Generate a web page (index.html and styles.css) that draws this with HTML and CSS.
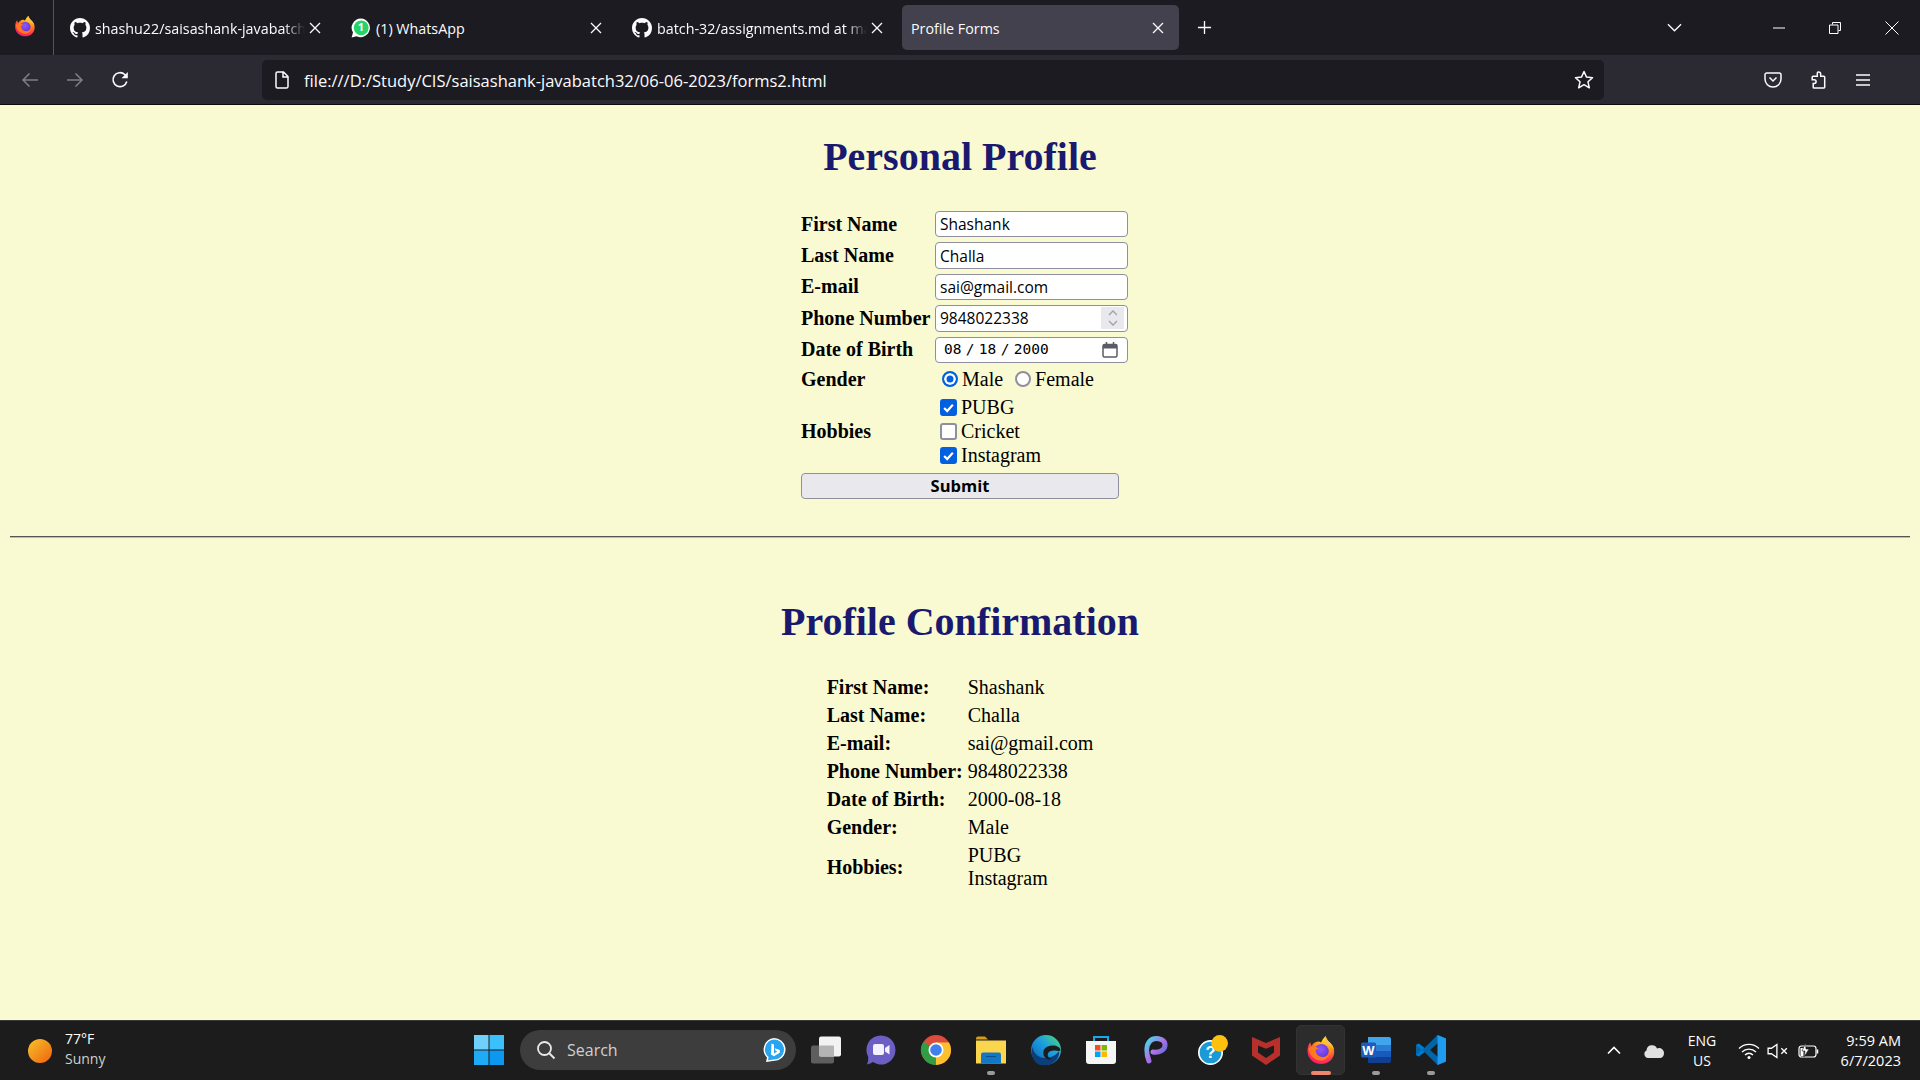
FILE: index.html
```html
<!DOCTYPE html>
<html lang="en">
<head>
<meta charset="utf-8">
<title>Profile Forms</title>
<link rel="stylesheet" href="styles.css">
</head>
<body>
<svg class="sprite" aria-hidden="true">
  <defs>
    <radialGradient id="ffBase" cx="0.7" cy="0.1" r="1">
      <stop offset="0" stop-color="#ffe226"/><stop offset="0.4" stop-color="#ff980e"/><stop offset="0.75" stop-color="#ff3750"/><stop offset="1" stop-color="#f5156c"/>
    </radialGradient>
    <radialGradient id="ffCore" cx="0.45" cy="0.35" r="0.8">
      <stop offset="0" stop-color="#9059ff"/><stop offset="1" stop-color="#592acb"/>
    </radialGradient>
    <linearGradient id="sunG" x1="0" y1="0" x2="1" y2="1">
      <stop offset="0" stop-color="#f7c22c"/><stop offset="1" stop-color="#f0620e"/>
    </linearGradient>
    <linearGradient id="edgeG" x1="0" y1="1" x2="1" y2="0">
      <stop offset="0" stop-color="#0c59a4"/><stop offset="0.55" stop-color="#1b9de2"/><stop offset="1" stop-color="#54dc6f"/>
    </linearGradient>
    <linearGradient id="pG" x1="0" y1="0" x2="1" y2="1">
      <stop offset="0" stop-color="#3ee0e8"/><stop offset="0.5" stop-color="#b46ee8"/><stop offset="1" stop-color="#2a6fd6"/>
    </linearGradient>
    <symbol id="i-firefox" viewBox="0 0 32 32">
      <path fill="url(#ffBase)" d="M21 1c.4 3 2.6 5 5 7.6 3 3.2 4.500 6.600 4 10.900C29.200 26.300 23.400 31 16 31 8 31 1.600 24.800 1.600 17c0-3.800 1-6.800 3-9.300.2 1.800.7 3 1.600 3.900.8-1.900 2.300-3.200 4.300-4.100 2-.9 4.300-.8 5.500.6 1.200-3 2.700-5.100 5-7.100z"/>
      <circle cx="16.500" cy="17.500" r="7.800" fill="url(#ffCore)"/>
      <path fill="#ff7a1a" d="M2.600 15c1.500-2.500 4-3.400 6-3 2.300.4 2.600 1.600 5 2.200-1.200 1-2.300.9-3.300 1.900 0 4 3 7.500 7.200 7.400 3.500 0 6.200-2.300 7-5.500.6 5-3.400 9.300-9 9.300C9.500 27.300 3.800 22 2.600 15z"/>
      <path fill="#ffbd4f" d="M21 1c.4 3 2.600 5 5 7.600 2 2.100 3.300 4.400 3.800 7-2-3.500-4.800-5-8.300-5.800-1.500-3-1.500-6-.5-8.800z"/>
    </symbol>
    <symbol id="i-gh" viewBox="0 0 16 16">
      <path fill="#fbfbfe" d="M8 0C3.580 0 0 3.580 0 8c0 3.540 2.290 6.530 5.470 7.590.4.070.55-.17.55-.38 0-.19-.01-.82-.01-1.490-2.010.37-2.530-.49-2.690-.94-.09-.23-.48-.94-.82-1.130-.28-.15-.68-.52-.01-.53.63-.01 1.080.58 1.230.82.72 1.210 1.870.87 2.330.66.070-.52.28-.87.51-1.070-1.780-.2-3.640-.89-3.640-3.950 0-.87.31-1.590.82-2.150-.08-.2-.36-1.020.08-2.120 0 0 .67-.21 2.200.82.64-.18 1.320-.27 2-.27s1.360.09 2 .27c1.530-1.040 2.200-.82 2.200-.82.44 1.100.16 1.920.08 2.120.51.56.82 1.270.82 2.150 0 3.070-1.870 3.750-3.650 3.950.29.25.54.73.54 1.480 0 1.070-.01 1.930-.01 2.200 0 .21.15.46.55.38A8.010 8.010 0 0 0 16 8c0-4.420-3.580-8-8-8z"/>
    </symbol>
    <symbol id="i-x" viewBox="0 0 12 12">
      <path d="M1 1l10 10M11 1L1 11" stroke="#fbfbfe" stroke-width="1.3" fill="none"/>
    </symbol>
  </defs>
</svg>

<header class="browser">
  <div class="tabbar">
    <div class="ff-slot"><svg class="ff-logo"><use href="#i-firefox"/></svg></div>
    <div class="tabs">
      <div class="tab">
        <svg class="favicon"><use href="#i-gh"/></svg>
        <span class="tab-title tab-fade">shashu22/saisashank-javabatch3</span>
        <svg class="tab-x"><use href="#i-x"/></svg>
      </div>
      <div class="tab">
        <svg class="favicon" viewBox="0 0 20 20">
          <path fill="#fff" d="M10 .5A9.300 9.300 0 0 0 2 14.600L.6 19.500l5-1.300A9.300 9.300 0 1 0 10 .5z"/>
          <circle cx="10.200" cy="9.800" r="7.400" fill="#25d366"/>
        </svg>
        <span class="wa-badge">1</span>
        <span class="tab-title">(1) WhatsApp</span>
        <svg class="tab-x"><use href="#i-x"/></svg>
      </div>
      <div class="tab">
        <svg class="favicon"><use href="#i-gh"/></svg>
        <span class="tab-title tab-fade">batch-32/assignments.md at ma</span>
        <svg class="tab-x"><use href="#i-x"/></svg>
      </div>
      <div class="tab tab-active">
        <span class="tab-title">Profile Forms</span>
        <svg class="tab-x"><use href="#i-x"/></svg>
      </div>
      <svg class="newtab" viewBox="0 0 16 16"><path d="M8 1v14M1 8h14" stroke="#fbfbfe" stroke-width="1.4"/></svg>
    </div>
    <svg class="chev" viewBox="0 0 16 10"><path d="M1 1l7 7 7-7" stroke="#fbfbfe" stroke-width="1.4" fill="none"/></svg>
    <div class="winctl">
      <svg viewBox="0 0 12 12" class="wc"><path d="M0 6h12" stroke="#fff" stroke-width="1"/></svg>
      <svg viewBox="0 0 12 12" class="wc"><path d="M3.500 2.500V.5h8v8h-2M.5 3h8.500v8.500H.5z" stroke="#fff" stroke-width="1" fill="none"/></svg>
      <svg viewBox="0 0 14 14" class="wc wc-x"><path d="M.5.500l13 13M13.500.500l-13 13" stroke="#fff" stroke-width="1"/></svg>
    </div>
  </div>
  <div class="toolbar">
    <svg class="tb-icon dim" viewBox="0 0 18 18"><path d="M17 9H2M8.500 2.500L2 9l6.500 6.500" stroke="#fbfbfe" stroke-width="1.5" fill="none"/></svg>
    <svg class="tb-icon dim" viewBox="0 0 18 18"><path d="M1 9h15M9.500 2.500L16 9l-6.500 6.500" stroke="#fbfbfe" stroke-width="1.5" fill="none"/></svg>
    <svg class="tb-icon" viewBox="0 0 18 18"><path d="M15.800 10.500A7 7 0 1 1 13.800 3.500L15.500 5.500" stroke="#fbfbfe" stroke-width="1.6" fill="none"/><path d="M16.800 1v6.300h-6.300z" fill="#fbfbfe"/></svg>
    <div class="urlbar">
      <svg class="file-ic" viewBox="0 0 16 18"><path d="M3.500 1h6L14 5.500v10a1.500 1.500 0 0 1-1.500 1.500h-9A1.500 1.500 0 0 1 2 15.500v-13A1.500 1.500 0 0 1 3.500 1zM9 1v5h5" stroke="#fbfbfe" stroke-width="1.5" fill="none"/></svg>
      <span class="url">file:///D:/Study/CIS/saisashank-javabatch32/06-06-2023/forms2.html</span>
      <svg class="star" viewBox="0 0 20 20"><path d="M10 1.500l2.500 5.600 6 .6-4.500 4.100 1.300 6L10 14.700l-5.300 3.100 1.300-6L1.500 7.700l6-.6z" stroke="#fbfbfe" stroke-width="1.5" fill="none" stroke-linejoin="round"/></svg>
    </div>
    <div class="tb-right">
      <svg class="tb-icon" viewBox="0 0 18 18"><path d="M2.800 2h12.400A1.800 1.800 0 0 1 17 3.800V8A8 8 0 0 1 1 8V3.800A1.800 1.800 0 0 1 2.800 2z" stroke="#fbfbfe" stroke-width="1.5" fill="none"/><path d="M5.500 6.500L9 10l3.500-3.500" stroke="#fbfbfe" stroke-width="1.5" fill="none"/></svg>
      <svg class="tb-icon" viewBox="0 0 18 18"><path d="M9.500 1c1.300 0 2.200 1 2.200 2.200v2h3c.6 0 1 .4 1 1v10.100c0 .4-.3.700-.7.700H5c-.5 0-.8-.3-.8-.8v-3.700h1a1.900 1.900 0 0 0 0-3.800h-2V6.200c0-.6.4-1 1-1h4.100v-2C8.300 2 8.200 1 9.500 1z" stroke="#fbfbfe" stroke-width="1.5" fill="none"/></svg>
      <svg class="tb-icon" viewBox="0 0 18 18"><path d="M2 4h14M2 9h14M2 14h14" stroke="#fbfbfe" stroke-width="1.5"/></svg>
    </div>
  </div>
</header>

<main class="page">
  <h1 class="title">Personal Profile</h1>
  <form class="form">
    <label class="lbl">First Name</label>
    <input class="field" type="text" value="Shashank">
    <label class="lbl">Last Name</label>
    <input class="field" type="text" value="Challa">
    <label class="lbl">E-mail</label>
    <input class="field" type="text" value="sai@gmail.com">
    <label class="lbl">Phone Number</label>
    <div class="field combo">
      <span class="combo-val">9848022338</span>
      <span class="spin">
        <svg viewBox="0 0 10 18" class="spin-ic"><path d="M1 6l4-4 4 4M1 12l4 4 4-4" stroke="#a0a0aa" stroke-width="1.3" fill="none"/></svg>
      </span>
    </div>
    <label class="lbl">Date of Birth</label>
    <div class="field combo">
      <span class="date-val">08 / 18 / 2000</span>
      <svg viewBox="0 0 16 16" class="cal"><path d="M2.500 2.500h11a1.500 1.500 0 0 1 1.500 1.500v9.500a1.500 1.500 0 0 1-1.500 1.500h-11A1.500 1.500 0 0 1 1 13.500V4a1.500 1.500 0 0 1 1.500-1.500z" fill="none" stroke="#5b5b66" stroke-width="1.5"/><path d="M1 2.500h14v4H1z" fill="#5b5b66"/><path d="M4.500 0v3M11.500 0v3" stroke="#5b5b66" stroke-width="1.5"/></svg>
    </div>
    <span class="lbl">Gender</span>
    <div class="radios">
      <input class="radio" type="radio" name="g" checked><span class="opt">Male</span>
      <input class="radio radio-b" type="radio" name="g"><span class="opt">Female</span>
    </div>
    <span class="lbl">Hobbies</span>
    <div class="checks">
      <div class="check-row"><input class="check" type="checkbox" checked><span class="opt">PUBG</span></div>
      <div class="check-row"><input class="check" type="checkbox"><span class="opt">Cricket</span></div>
      <div class="check-row"><input class="check" type="checkbox" checked><span class="opt">Instagram</span></div>
    </div>
    <button class="submit" type="button">Submit</button>
  </form>
  <hr class="rule">
  <h1 class="title title-2">Profile Confirmation</h1>
  <table class="confirm">
    <tr><th>First Name:</th><td>Shashank</td></tr>
    <tr><th>Last Name:</th><td>Challa</td></tr>
    <tr><th>E-mail:</th><td>sai@gmail.com</td></tr>
    <tr><th>Phone Number:</th><td>9848022338</td></tr>
    <tr><th>Date of Birth:</th><td>2000-08-18</td></tr>
    <tr><th>Gender:</th><td>Male</td></tr>
    <tr><th>Hobbies:</th><td>PUBG<br>Instagram</td></tr>
  </table>
</main>

<footer class="taskbar">
  <div class="weather">
    <svg class="sun" viewBox="0 0 24 24"><circle cx="12" cy="12" r="12" fill="url(#sunG)"/></svg>
    <div class="weather-text"><span>77°F</span><span class="w-sub">Sunny</span></div>
  </div>
  <div class="app">
    <svg class="ic" viewBox="0 0 30 30">
      <rect x="0" y="0" width="14.500" height="14.500" fill="#6fd0fb"/><rect x="15.500" y="0" width="14.500" height="14.500" fill="#3cc0fb"/><rect x="0" y="15.500" width="14.500" height="14.500" fill="#1eaaf5"/><rect x="15.500" y="15.500" width="14.500" height="14.500" fill="#0d98f0"/>
    </svg>
  </div>
  <div class="search">
    <svg class="mag" viewBox="0 0 20 20"><circle cx="8.500" cy="8.500" r="6.500" stroke="#e8e8e8" stroke-width="1.8" fill="none"/><path d="M13 13l5.500 5.500" stroke="#e8e8e8" stroke-width="2"/></svg>
    <span class="search-txt">Search</span>
    <svg class="bing" viewBox="0 0 26 26">
      <path fill="#fff" d="M13 1a11.500 11.500 0 0 1 4 22.300L5 25l1-4.500A11.500 11.500 0 0 1 13 1z"/>
      <path fill="#2aa4ee" d="M13 2.500a10 10 0 0 1 3.500 19.400L7 23.300l.6-3.200A10 10 0 0 1 13 2.500z"/>
      <path fill="#fff" d="M10.500 6.500l2.500 1v9l3.300-1.900-1.700-.8-1-2.600 5.200 1.800v2.800l-5.800 3.400-3-1.700z"/>
    </svg>
  </div>
  <div class="app">
    <svg class="ic" viewBox="0 0 30 27">
      <rect x="0" y="9" width="23" height="18" rx="2" fill="#5e5e5e"/>
      <rect x="8" y="0" width="22" height="20" rx="2" fill="#f2f2f2"/>
      <rect x="8" y="9" width="15" height="11" rx="1" fill="#b4b4b4"/>
    </svg>
  </div>
  <div class="app">
    <svg class="ic" viewBox="0 0 30 30">
      <path fill="#6b5fc4" d="M15 .5a14.500 14.500 0 1 1-8 26.600C5.500 28.300 3 29.300 .8 29.500 2 27.800 2.300 25.500 2.200 22A14.500 14.500 0 0 1 15 .5z"/>
      <rect x="7" y="9" width="11" height="11" rx="2" fill="#f4f1ff"/><path d="M19 13l4.500-3v9.500L19 16.500z" fill="#f4f1ff"/>
    </svg>
  </div>
  <div class="app">
    <svg class="ic" viewBox="0 0 30 30">
      <circle cx="15" cy="15" r="15" fill="#dd4b3a"/>
      <path d="M15 15L2 22.500A15 15 0 0 0 15 30z" fill="#2f9e44"/><path d="M2.500 6.700L15 15 2 22.500A15 15 0 0 1 2.500 6.700z" fill="#2f9e44"/>
      <path d="M15 15h15A15 15 0 0 1 15 30z" fill="#fbc02d"/><path d="M15 15h15a15 15 0 0 0-2-7.500H15z" fill="#fbc02d"/>
      <circle cx="15" cy="15" r="7.500" fill="#fff"/><circle cx="15" cy="15" r="5.800" fill="#3f7fee"/>
    </svg>
  </div>
  <div class="app">
    <svg class="ic" viewBox="0 0 30 27">
      <path fill="#d69c1c" d="M0 2a2 2 0 0 1 2-2h7l3 3h-12z"/>
      <path fill="#fbd54e" d="M0 4h30v23H0z"/>
      <path fill="#1277c4" d="M5 18a2 2 0 0 1 2-2h16a2 2 0 0 1 2 2v9H5z"/>
      <path stroke="#0d4f8a" stroke-width="1" d="M10 20h10"/>
    </svg>
    <span class="dot"></span>
  </div>
  <div class="app">
    <svg class="ic" viewBox="0 0 30 30">
      <circle cx="15" cy="15" r="15" fill="url(#edgeG)"/>
      <path fill="#0c3f7a" d="M9 30C3 28-1 20 1.500 12 3 21 11 25 20 22c3-1 6-3 8-6 1 5-3 11-8 13-4 1.500-8 1.500-11 1z"/>
      <path fill="#1c1c1c" d="M29.500 15.500c0-3-3.500-5-8-5-6 0-10 3.500-9 9 .8 4 5 5.500 8.500 4.800-3.500-1-5-3.500-4-6 1-2 3.500-3 6.500-2.800 2.500 0 4.500 1 6 0z"/>
    </svg>
  </div>
  <div class="app">
    <svg class="ic" viewBox="0 0 30 30">
      <path d="M8 6V2h14v4" stroke="#1ea7e8" stroke-width="2" fill="none"/>
      <path fill="#f6f6f6" d="M0 6h30v20a3 3 0 0 1-3 3H3a3 3 0 0 1-3-3z"/>
      <rect x="9" y="10" width="5.500" height="5.500" fill="#f25022"/><rect x="15.500" y="10" width="5.500" height="5.500" fill="#7fba00"/>
      <rect x="9" y="16.500" width="5.500" height="5.500" fill="#00a4ef"/><rect x="15.500" y="16.500" width="5.500" height="5.500" fill="#ffb900"/>
    </svg>
  </div>
  <div class="app">
    <svg class="ic" viewBox="0 0 24 30">
      <path fill="none" stroke="url(#pG)" stroke-width="5" stroke-linecap="round" d="M5 26C2 18 2 10 6 6c4-4 14-3 15 3 1 6-6 9-12 8"/>
    </svg>
  </div>
  <div class="app">
    <svg class="ic ic-help" viewBox="0 0 36 36">
      <circle cx="15" cy="21" r="14" fill="#1b9ad6" stroke="#fff" stroke-width="2"/>
      <text x="15" y="28" class="help-q">?</text>
      <circle cx="26" cy="10" r="10" fill="#fdc00f"/>
    </svg>
  </div>
  <div class="app">
    <svg class="ic" viewBox="0 0 28 30">
      <path fill="#b8302c" d="M0 2l14 6 14-6v18.500L14 30 0 20.500zM6 10.500v7l8 5.500 8-5.500v-7l-8 3.200z"/>
    </svg>
  </div>
  <div class="app app-on">
    <span class="app-bg"></span>
    <svg class="ic ic-top"><use href="#i-firefox"/></svg>
    <span class="dot dot-on"></span>
  </div>
  <div class="app">
    <svg class="ic" viewBox="0 0 30 26">
      <path fill="#41a5ee" d="M7 0h21a2 2 0 0 1 2 2v6H7z"/><rect x="7" y="8" width="23" height="6" fill="#2b7cd3"/><rect x="7" y="14" width="23" height="6" fill="#185abd"/><path fill="#103f91" d="M7 20h23v4a2 2 0 0 1-2 2H7z"/>
      <rect x="0" y="5.500" width="15" height="15" rx="1.500" fill="#1a5dbd"/>
      <text x="7.500" y="17.500" class="word-w">W</text>
    </svg>
    <span class="dot"></span>
  </div>
  <div class="app">
    <svg class="ic" viewBox="0 0 30 30">
      <path fill="#0065a9" d="M21.500 30L8.500 17 2.800 21.500 0 20V10l2.800-1.500L8.500 13 21.500 0 30 3.500v23zM22 8l-8 7 8 7z"/>
      <path fill="#1f9cf0" d="M21.500 0L30 3.500v23L21.500 30z"/>
      <path fill="#007acc" d="M21.500 0L6 15.500 0 10l2.800-1.500 5.700 4.500L21.500 0zM21.500 30L6 14.500 0 20l2.800 1.500 5.700-4.500L21.500 30z"/>
    </svg>
    <span class="dot"></span>
  </div>
  <div class="tray">
    <div class="t t-chev"><svg viewBox="0 0 14 9" class="t-svg-s"><path d="M1 7.500l6-6 6 6" stroke="#fff" stroke-width="1.6" fill="none"/></svg></div>
    <div class="t t-cloud"><svg viewBox="0 0 22 14" class="t-svg-m"><path fill="#e0e0e0" d="M5 14A4 4 0 0 1 3.500 6.500 5.500 5.500 0 0 1 14 4.500 5 5 0 0 1 21 9.500c0 2.500-2 4.500-4 4.500z"/></svg></div>
    <div class="t t-lang"><span>ENG</span><span>US</span></div>
    <div class="t t-wifi"><svg viewBox="0 0 22 16" class="t-svg-m"><path d="M1 5.500a14 14 0 0 1 20 0M4 9a10 10 0 0 1 14 0M7 12a5.500 5.500 0 0 1 8 0" stroke="#fff" stroke-width="1.3" fill="none"/><circle cx="11" cy="14.500" r="1.500" fill="#fff"/></svg></div>
    <div class="t t-vol"><svg viewBox="0 0 20 14" class="t-svg-m"><path d="M1 4.500h3L9 1v12L4 9.500H1z" stroke="#fff" stroke-width="1.2" fill="none"/><path d="M13 4.500l5 5M18 4.500l-5 5" stroke="#fff" stroke-width="1.2"/></svg></div>
    <div class="t t-bat"><svg viewBox="0 0 22 16" class="t-svg-m"><rect x="1" y="3" width="17" height="11" rx="2.500" stroke="#fff" stroke-width="1.2" fill="none"/><path d="M19.500 6.500v4" stroke="#fff" stroke-width="1.5"/><path d="M2.500 13V5h3v8z" fill="#fff"/><path d="M7.500 0L4 8h3l-1 6 5-8H8z" fill="#fff" stroke="#1c1c1c" stroke-width=".6"/></svg></div>
    <div class="t t-clock"><span>9:59 AM</span><span>6/7/2023</span></div>
  </div>
</footer>
</body>
</html>
```

FILE: styles.css
```css
* { box-sizing: border-box; }
html, body { margin: 0; height: 100%; }
body {
  display: flex;
  flex-direction: column;
  height: 100vh;
  overflow: hidden;
  font-family: "Open Sans", "Liberation Sans", sans-serif;
  background: #fafad2;
}
.sprite { width: 0; height: 0; position: absolute; }

/* browser chrome */
.browser { flex: none; color: #fbfbfe; }
.tabbar { height: 55px; background: #1c1b22; display: flex; align-items: center; }
.ff-slot { width: 54px; height: 55px; border-right: 1px solid #55545c; display: flex; align-items: center; justify-content: center; padding: 0 3px 4px 0; flex: none; }
.ff-logo { width: 22px; height: 22px; }
.tabs { display: flex; align-items: center; gap: 4px; margin-left: 5px; }
.tab { position: relative; width: 277px; height: 45px; border-radius: 5px; display: flex; align-items: center; padding: 0 6px 0 11px; }
.tab-active { background: #42414d; padding-left: 9px; }
.favicon { width: 20px; height: 20px; flex: none; margin-right: 5px; }
.wa-badge { position: absolute; left: 11px; top: 12px; width: 20px; text-align: center; font-size: 11px; line-height: 20px; color: #fff; font-weight: 700; }
.tab-title { flex: 1; min-width: 0; white-space: nowrap; font-size: 14.3px; line-height: 20px; padding-top: 2px; color: #fbfbfe; }
.tab-fade { -webkit-mask-image: linear-gradient(to right, #000 90%, transparent 100%); mask-image: linear-gradient(to right, #000 90%, transparent 100%); }
.tab-x { width: 12px; height: 12px; flex: none; margin: 0 9px 0 4px; }
.newtab { width: 15px; height: 15px; margin-left: 14px; flex: none; }
.chev { width: 15px; height: 10px; margin-left: auto; flex: none; }
.winctl { display: flex; align-items: center; margin: 0 21px 0 91px; gap: 44px; }
.wc { width: 12px; height: 12px; display: block; }
.wc-x { width: 14px; height: 14px; }

.toolbar { height: 50px; background: #2b2a33; display: flex; align-items: center; padding: 1px 0 0 21px; border-bottom: 1px solid #0c0c0d; }
.tb-icon { width: 18px; height: 18px; flex: none; margin-right: 27px; }
.dim { opacity: .4; }
.urlbar { flex: none; width: 1342px; height: 40px; margin-left: 106px; background: #1c1b22; border-radius: 5px; display: flex; align-items: center; padding: 0 10px 0 12px; }
.file-ic { width: 16px; height: 18px; flex: none; }
.url { margin-left: 14px; padding-top: 2px; font-size: 16.5px; line-height: 22px; color: #fbfbfe; white-space: nowrap; flex: 1; }
.star { width: 20px; height: 20px; flex: none; }
.tb-right { display: flex; align-items: center; margin-left: 160px; }

/* page */
.page { flex: 1; min-height: 0; padding: 0 10px; color: #000; font-family: "Liberation Serif", serif; font-size: 20px; line-height: 23px; }
.title { margin: 29px 0 0; text-align: center; color: #191970; font-size: 40px; line-height: 46px; font-weight: 700; }
.form {
  width: 318px;
  margin: 31px auto 0;
  display: grid;
  grid-template-columns: 134px 193px;
  grid-template-rows: repeat(5, 26.4px) 23px 72px 26px;
  row-gap: 5px;
  align-items: center;
}
.lbl { font-weight: 700; }
.field { width: 193px; height: 26.4px; margin: 0; padding: 0 4px; border: 1px solid #8f8f9d; border-radius: 4px; background: #fff; color: #000; font-family: "Open Sans", sans-serif; font-size: 15.5px; outline: none; }
.combo { display: flex; align-items: center; }
.combo-val { flex: 1; }
.spin { width: 23px; height: 22px; background: #e9e9ed; margin-right: -1px; display: flex; align-items: center; justify-content: center; }
.spin-ic { width: 10px; height: 18px; }
.date-val { flex: 1; padding-left: 4px; font-family: "DejaVu Sans Mono", monospace; font-size: 14.5px; word-spacing: -4.4px; color: #000; white-space: nowrap; }
.cal { width: 16px; height: 16px; flex: none; margin-right: 5px; }
.radios { display: flex; align-items: center; padding-left: 7px; }
.radio { appearance: none; width: 16px; height: 16px; margin: 0 4px 0 0; border: 2px solid #8f8f9d; border-radius: 50%; background: #fff; }
.radio:checked { border-color: #0060df; background: #0060df; box-shadow: inset 0 0 0 2.5px #fff; }
.radio-b { margin-left: 12px; }
.checks { display: flex; flex-direction: column; gap: 1px; padding-left: 5px; }
.check-row { display: flex; align-items: center; height: 23px; }
.check { appearance: none; width: 17px; height: 17px; margin: 0 4px 0 0; border: 2px solid #8f8f9d; border-radius: 3px; background: #fff center / 13px 13px no-repeat; }
.check:checked { border-color: #0060df; background-color: #0060df; background-image: url("data:image/svg+xml,%3Csvg xmlns='http://www.w3.org/2000/svg' viewBox='0 0 12 12'%3E%3Cpath d='M2 6.500l2.800 2.800L10 3.500' stroke='%23fff' stroke-width='2' fill='none'/%3E%3C/svg%3E"); }
.submit { grid-column: 1 / -1; width: 318px; height: 26px; margin: 0; padding: 0; border: 1px solid #8f8f9d; border-radius: 4px; background: #e9e9ed; color: #000; font-family: "Open Sans", sans-serif; font-weight: 700; font-size: 16.5px; line-height: 22px; }
.rule { margin: 37px 0 0; border: 0; border-top: 1px solid #555; border-bottom: 1px solid #bbb; height: 2px; }
.title-2 { margin-top: 61px; }
.confirm { margin: 29px auto 0; border-collapse: separate; border-spacing: 0; }
.confirm th { text-align: left; font-weight: 700; padding: 2.5px 2.5px 2.5px 0; }
.confirm td { padding: 2.5px 0 2.5px 2.5px; }

/* taskbar */
.taskbar { flex: none; height: 60px; background: #1c1c1c; border-top: 1px solid #3a3a3a; display: flex; align-items: center; color: #fff; font-family: "Open Sans", sans-serif; }
.weather { width: 461.5px; flex: none; display: flex; align-items: center; padding-left: 28px; }
.sun { width: 24px; height: 24px; flex: none; }
.weather-text { display: flex; flex-direction: column; margin-left: 13px; padding-bottom: 3px; font-size: 14px; line-height: 20px; }
.w-sub { color: #cfcfcf; }
.app { position: relative; width: 55px; height: 59px; padding-bottom: 2px; flex: none; display: flex; align-items: center; justify-content: center; }
.ic { width: 30px; height: 30px; display: block; overflow: visible; }
.ic-help { position: relative; left: 2px; }
.ic-top { position: relative; }
.app-bg { position: absolute; left: 3px; top: 4px; width: 49px; height: 50px; border-radius: 5px; background: #2c2c2c; border: 1px solid #333; }
.dot { position: absolute; left: 23.5px; top: 50px; width: 8px; height: 4px; border-radius: 2px; background: #9b9b9b; }
.dot-on { left: 17.5px; width: 20px; background: #f0866c; }
.help-q { font-family: "Liberation Sans", sans-serif; font-weight: 700; font-size: 20px; fill: #fff; text-anchor: middle; }
.word-w { font-family: "Liberation Sans", sans-serif; font-weight: 700; font-size: 13px; fill: #fff; text-anchor: middle; }
.search { width: 276px; height: 40px; margin: 0 2px 1px 3.5px; flex: none; border-radius: 20px; background: #3d3d3d; display: flex; align-items: center; padding-left: 16px; }
.mag { width: 20px; height: 20px; flex: none; }
.search-txt { margin-left: 11px; font-size: 16px; color: #d0d0d0; flex: 1; }
.bing { width: 26px; height: 26px; margin-right: 9px; flex: none; }
.tray { margin: 0 19px 0 auto; display: flex; align-items: center; height: 59px; }
.t { display: flex; align-items: center; justify-content: center; flex: none; }
.t-chev { width: 40px; }
.t-cloud { width: 40px; }
.t-lang { width: 56px; flex-direction: column; font-size: 14px; line-height: 20px; }
.t-wifi { width: 30px; margin-left: 4px; }
.t-vol { width: 28px; }
.t-bat { width: 34px; }
.t-clock { width: 75px; flex-direction: column; align-items: flex-end; font-size: 14.5px; line-height: 20px; }
.t-svg-s { width: 14px; height: 9px; }
.t-svg-m { width: 22px; height: 16px; }
```
